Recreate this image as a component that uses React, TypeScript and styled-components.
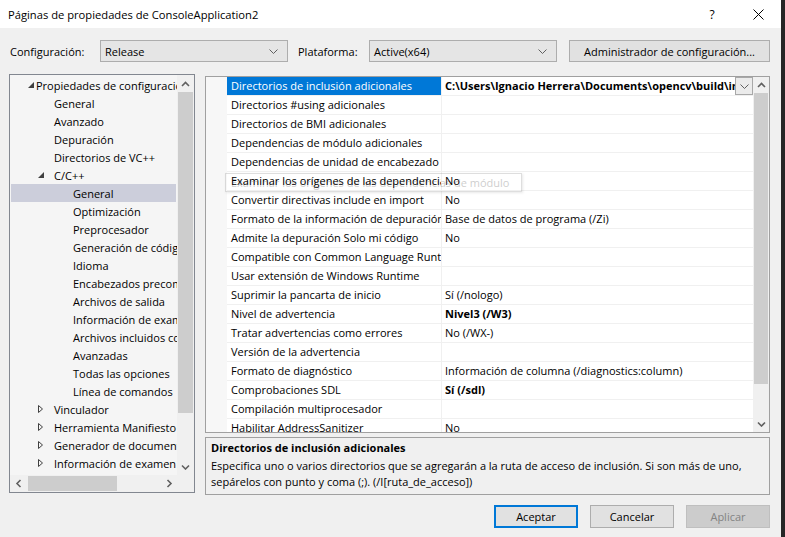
import React from "react";
import styled, { createGlobalStyle, css } from "styled-components";

const GlobalStyle = createGlobalStyle`
  html, body { margin: 0; padding: 0; background: #262626; }
  body { font-family: "Open Sans", "Noto Sans", sans-serif; font-size: 11px; color: #000; }
  * { box-sizing: border-box; }
`;

const Screen = styled.div`
  width: 785px;
  height: 537px;
  display: flex;
  background: #262626;
  overflow: hidden;
`;

const Window = styled.div`
  width: 781px;
  height: 537px;
  background: #f0f0f0;
  display: flex;
  flex-direction: column;
`;

const TitleBar = styled.div`
  height: 28px;
  flex-shrink: 0;
  background: #ffffff;
  display: flex;
  align-items: center;
  padding-left: 8px;
`;

const Title = styled.div`
  flex: 1;
  font-size: 11.2px;
`;

const CaptionButton = styled.div`
  width: 46px;
  height: 28px;
  display: flex;
  align-items: center;
  justify-content: center;
  font-size: 12px;
`;

const Body = styled.div`
  flex: 1;
  display: flex;
  flex-direction: column;
  padding: 12px 11px 0 9px;
`;

const ConfigRow = styled.div`
  height: 22px;
  display: flex;
  align-items: center;
`;

const Label = styled.div<{ $w: number; $ml?: number }>`
  width: ${(p) => p.$w}px;
  margin-left: ${(p) => p.$ml ?? 0}px;
  padding-left: 1px;
  white-space: nowrap;
`;

const Combo = styled.div`
  width: 188px;
  height: 22px;
  border: 1px solid #adadad;
  background: #e5e5e5;
  display: flex;
  align-items: center;
  padding: 0 9px 0 4px;
`;

const ComboText = styled.div`
  flex: 1;
`;

const WideButton = styled.div`
  margin-left: auto;
  width: 201px;
  height: 22px;
  border: 1px solid #adadad;
  background: #e1e1e1;
  display: flex;
  align-items: center;
  justify-content: center;
`;

const Main = styled.div`
  margin-top: 12px;
  height: 421px;
  display: flex;
  gap: 10px;
`;

/* ---------- Tree ---------- */

const TreeBox = styled.div`
  width: 186px;
  height: 419px;
  flex-shrink: 0;
  border: 1px solid #828790;
  background: #f0f0f0;
  display: grid;
  grid-template-columns: 167px 17px;
  grid-template-rows: 400px 17px;
`;

const TreeList = styled.div`
  background: #f5f5f5;
  overflow: hidden;
  padding-top: 1px;
`;

const TreeRow = styled.div<{ $pad: number; $selected?: boolean }>`
  height: 18px;
  margin: 0 1px;
  display: flex;
  align-items: center;
  white-space: nowrap;
  padding-left: ${(p) => p.$pad - 1}px;
  background: ${(p) => (p.$selected ? "#cccedb" : "transparent")};
`;

const ExpanderSlot = styled.div<{ $w: number }>`
  width: ${(p) => p.$w}px;
  flex-shrink: 0;
  display: flex;
  align-items: center;
`;

const VScroll = styled.div`
  display: flex;
  flex-direction: column;
  background: #f0f0f0;
`;

const HScroll = styled.div`
  display: flex;
  align-items: stretch;
  background: #f0f0f0;
`;

const ScrollArrow = styled.div<{ $size: number }>`
  width: ${(p) => p.$size}px;
  height: ${(p) => p.$size}px;
  flex-shrink: 0;
  display: flex;
  align-items: center;
  justify-content: center;
`;

const VThumb = styled.div<{ $h: number }>`
  height: ${(p) => p.$h}px;
  flex-shrink: 0;
  margin: 0 1px;
  background: #cdcdcd;
`;

const HThumb = styled.div<{ $w: number }>`
  width: ${(p) => p.$w}px;
  flex-shrink: 0;
  margin: 1px 0 1px 1px;
  background: #cdcdcd;
`;

const Spacer = styled.div`
  flex: 1;
`;

/* ---------- Property grid ---------- */

const RightCol = styled.div`
  flex: 1;
  min-width: 0;
  margin-top: 2px;
  display: flex;
  flex-direction: column;
`;

const GridBox = styled.div`
  position: relative;
  height: 357px;
  border: 1px solid #a0a0a0;
  display: flex;
  overflow: hidden;
`;

const GridRows = styled.div`
  flex: 1;
  min-width: 0;
  padding-left: 21px;
  background: #f7f7f7;
  overflow: hidden;
`;

const GridRow = styled.div`
  height: 19px;
  display: flex;
  background: #ffffff;
  border-bottom: 1px solid #f0f0f0;
`;

const NameCell = styled.div<{ $selected?: boolean }>`
  width: 215px;
  flex-shrink: 0;
  padding-left: 4px;
  border-right: 1px solid #f0f0f0;
  white-space: nowrap;
  overflow: hidden;
  line-height: 18px;
  ${(p) =>
    p.$selected &&
    css`
      background: #0078d7;
      color: #ffffff;
    `}
`;

const ValueCell = styled.div`
  flex: 1;
  min-width: 0;
  display: flex;
  align-items: center;
  padding-left: 3px;
`;

const ValueText = styled.div<{ $bold?: boolean }>`
  flex: 1;
  min-width: 0;
  white-space: nowrap;
  overflow: hidden;
  line-height: 18px;
  font-weight: ${(p) => (p.$bold ? 700 : 400)};
`;

const DropButton = styled.div`
  width: 18px;
  height: 18px;
  flex-shrink: 0;
  border: 1px solid #a8a8a8;
  background: #ebebeb;
  display: flex;
  align-items: center;
  justify-content: center;
`;

const GridScroll = styled.div`
  width: 16px;
  flex-shrink: 0;
  display: flex;
  flex-direction: column;
  background: #f0f0f0;
`;

const Tooltip = styled.div`
  position: absolute;
  left: 19px;
  top: 96px;
  width: 297px;
  height: 19px;
  border: 1px solid #606060;
  padding-left: 5px;
  line-height: 17px;
  white-space: nowrap;
  overflow: hidden;
  opacity: 0.2;
  box-shadow: 1px 1px 2px rgba(0, 0, 0, 0.4);
  pointer-events: none;
`;

const DescBox = styled.div`
  margin-top: 4px;
  height: 58px;
  border: 1px solid #a0a0a0;
  padding: 2px 5px 0 5px;
  line-height: 16px;
`;

const DescTitle = styled.div`
  font-weight: 700;
  margin-bottom: 2px;
`;

const DescText = styled.div`
  white-space: nowrap;
`;

/* ---------- Buttons ---------- */

const ButtonRow = styled.div`
  margin-top: 10px;
  display: flex;
  justify-content: flex-end;
  gap: 12px;
`;

const DialogButton = styled.div<{ $variant?: "primary" | "disabled" }>`
  width: 84px;
  height: 23px;
  display: flex;
  align-items: center;
  justify-content: center;
  border: 1px solid #adadad;
  background: #e1e1e1;
  ${(p) =>
    p.$variant === "primary" &&
    css`
      border: 2px solid #0078d7;
    `}
  ${(p) =>
    p.$variant === "disabled" &&
    css`
      border-color: #bfbfbf;
      background: #cccccc;
      color: #838383;
    `}
`;

/* ---------- Icons ---------- */

const ChevronDown = ({ color = "#606060", w = 9, h = 5, sw = 1 }: { color?: string; w?: number; h?: number; sw?: number }) => (
  <svg width={w} height={h} viewBox={`0 0 ${w} ${h}`}>
    <polyline points={`0.5,0.5 ${w / 2},${h - 0.5} ${w - 0.5},0.5`} fill="none" stroke={color} strokeWidth={sw} />
  </svg>
);

const ScrollChevron = ({ dir }: { dir: "up" | "down" | "left" | "right" }) => {
  const pts: Record<string, string> = {
    up: "1,5 4.5,1.5 8,5",
    down: "1,1.5 4.5,5 8,1.5",
    left: "5.5,1 2,4.5 5.5,8",
    right: "2.5,1 6,4.5 2.5,8",
  };
  const vertical = dir === "up" || dir === "down";
  return (
    <svg width={vertical ? 9 : 8} height={vertical ? 6 : 9}>
      <polyline points={pts[dir]} fill="none" stroke="#606060" strokeWidth={1.6} />
    </svg>
  );
};

const ExpandedIcon = () => (
  <svg width="6" height="6">
    <polygon points="6,0 6,6 0,6" fill="#404040" />
  </svg>
);

const CollapsedIcon = () => (
  <svg width="5" height="8">
    <polygon points="0.5,0.5 4.5,4 0.5,7.5" fill="none" stroke="#404040" strokeWidth="1" />
  </svg>
);

const CloseIcon = () => (
  <svg width="11" height="11">
    <path d="M0.5 0.5 L10.5 10.5 M10.5 0.5 L0.5 10.5" stroke="#000" strokeWidth="1" />
  </svg>
);

/* ---------- Data ---------- */

type TreeItem = { label: string; pad: number; expander?: "open" | "closed"; slot?: number; selected?: boolean };

const treeItems: TreeItem[] = [
  { label: "Propiedades de configuración", pad: 18, expander: "open", slot: 8 },
  { label: "General", pad: 44 },
  { label: "Avanzado", pad: 44 },
  { label: "Depuración", pad: 44 },
  { label: "Directorios de VC++", pad: 44 },
  { label: "C/C++", pad: 28, expander: "open", slot: 16 },
  { label: "General", pad: 63, selected: true },
  { label: "Optimización", pad: 63 },
  { label: "Preprocesador", pad: 63 },
  { label: "Generación de código", pad: 63 },
  { label: "Idioma", pad: 63 },
  { label: "Encabezados precompilados", pad: 63 },
  { label: "Archivos de salida", pad: 63 },
  { label: "Información de examen", pad: 63 },
  { label: "Archivos incluidos con /external", pad: 63 },
  { label: "Avanzadas", pad: 63 },
  { label: "Todas las opciones", pad: 63 },
  { label: "Línea de comandos", pad: 63 },
  { label: "Vinculador", pad: 28, expander: "closed", slot: 16 },
  { label: "Herramienta Manifiesto", pad: 28, expander: "closed", slot: 16 },
  { label: "Generador de documentos XML", pad: 28, expander: "closed", slot: 16 },
  { label: "Información de examen", pad: 28, expander: "closed", slot: 16 },
];

type Prop = { name: string; value?: string; bold?: boolean; selected?: boolean };

const props: Prop[] = [
  { name: "Directorios de inclusión adicionales", value: "C:\\Users\\Ignacio Herrera\\Documents\\opencv\\build\\include", bold: true, selected: true },
  { name: "Directorios #using adicionales" },
  { name: "Directorios de BMI adicionales" },
  { name: "Dependencias de módulo adicionales" },
  { name: "Dependencias de unidad de encabezado adicionales" },
  { name: "Examinar los orígenes de las dependencias de módulo", value: "No" },
  { name: "Convertir directivas include en import", value: "No" },
  { name: "Formato de la información de depuración", value: "Base de datos de programa (/Zi)" },
  { name: "Admite la depuración Solo mi código", value: "No" },
  { name: "Compatible con Common Language Runtime" },
  { name: "Usar extensión de Windows Runtime" },
  { name: "Suprimir la pancarta de inicio", value: "Sí (/nologo)" },
  { name: "Nivel de advertencia", value: "Nivel3 (/W3)", bold: true },
  { name: "Tratar advertencias como errores", value: "No (/WX-)" },
  { name: "Versión de la advertencia" },
  { name: "Formato de diagnóstico", value: "Información de columna (/diagnostics:column)" },
  { name: "Comprobaciones SDL", value: "Sí (/sdl)", bold: true },
  { name: "Compilación multiprocesador" },
  { name: "Habilitar AddressSanitizer", value: "No" },
];

export default function App() {
  return (
    <>
      <GlobalStyle />
      <Screen>
        <Window>
          <TitleBar>
            <Title>Páginas de propiedades de ConsoleApplication2</Title>
            <CaptionButton>?</CaptionButton>
            <CaptionButton>
              <CloseIcon />
            </CaptionButton>
          </TitleBar>
          <Body>
            <ConfigRow>
              <Label $w={91}>Configuración:</Label>
              <Combo>
                <ComboText>Release</ComboText>
                <ChevronDown />
              </Combo>
              <Label $w={72} $ml={9}>Plataforma:</Label>
              <Combo>
                <ComboText>Active(x64)</ComboText>
                <ChevronDown />
              </Combo>
              <WideButton>Administrador de configuración...</WideButton>
            </ConfigRow>

            <Main>
              <TreeBox>
                <TreeList>
                  {treeItems.map((t, i) => (
                    <TreeRow key={i} $pad={t.pad} $selected={t.selected}>
                      {t.expander && (
                        <ExpanderSlot $w={t.slot ?? 8}>
                          {t.expander === "open" ? <ExpandedIcon /> : <CollapsedIcon />}
                        </ExpanderSlot>
                      )}
                      {t.label}
                    </TreeRow>
                  ))}
                </TreeList>
                <VScroll>
                  <ScrollArrow $size={17}>
                    <ScrollChevron dir="up" />
                  </ScrollArrow>
                  <VThumb $h={321} />
                  <Spacer />
                  <ScrollArrow $size={17}>
                    <ScrollChevron dir="down" />
                  </ScrollArrow>
                </VScroll>
                <HScroll>
                  <ScrollArrow $size={17}>
                    <ScrollChevron dir="left" />
                  </ScrollArrow>
                  <HThumb $w={89} />
                  <Spacer />
                  <ScrollArrow $size={17}>
                    <ScrollChevron dir="right" />
                  </ScrollArrow>
                </HScroll>
                <div />
              </TreeBox>

              <RightCol>
                <GridBox>
                  <GridRows>
                    {props.map((p, i) => (
                      <GridRow key={i}>
                        <NameCell $selected={p.selected}>{p.name}</NameCell>
                        <ValueCell>
                          <ValueText $bold={p.bold}>{p.value ?? ""}</ValueText>
                          {p.selected && (
                            <DropButton>
                              <ChevronDown />
                            </DropButton>
                          )}
                        </ValueCell>
                      </GridRow>
                    ))}
                  </GridRows>
                  <GridScroll>
                    <ScrollArrow $size={16}>
                      <ScrollChevron dir="up" />
                    </ScrollArrow>
                    <VThumb $h={291} />
                    <Spacer />
                    <ScrollArrow $size={16}>
                      <ScrollChevron dir="down" />
                    </ScrollArrow>
                  </GridScroll>
                  <Tooltip>Examinar los orígenes de las dependencias de módulo</Tooltip>
                </GridBox>
                <DescBox>
                  <DescTitle>Directorios de inclusión adicionales</DescTitle>
                  <DescText>
                    Especifica uno o varios directorios que se agregarán a la ruta de acceso de inclusión. Si son más de uno,
                  </DescText>
                  <DescText>sepárelos con punto y coma (;). (/I[ruta_de_acceso])</DescText>
                </DescBox>
              </RightCol>
            </Main>

            <ButtonRow>
              <DialogButton $variant="primary">Aceptar</DialogButton>
              <DialogButton>Cancelar</DialogButton>
              <DialogButton $variant="disabled">Aplicar</DialogButton>
            </ButtonRow>
          </Body>
        </Window>
      </Screen>
    </>
  );
}
